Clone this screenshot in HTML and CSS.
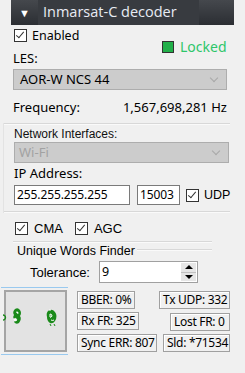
FILE: index.html
```html
<!DOCTYPE html>
<html lang="en">
<head>
  <meta charset="UTF-8">
  <title>Inmarsat-C decoder</title>
  <link rel="stylesheet" href="styles.css">
</head>
<body>
  <div class="panel">
    <div class="titlebar">
      <span class="arrow">&#9660;</span>
      <span class="title">Inmarsat-C decoder</span>
    </div>

    <div class="row-enabled">
      <label class="check"><span class="box on"></span>Enabled</label>
    </div>
    <div class="row-locked">
      <span class="led"></span><span class="locked">Locked</span>
    </div>

    <div class="les-label">LES:</div>
    <div class="select">AOR-W NCS 44<span class="chev"></span></div>

    <div class="freq">
      <span>Frequency:</span>
      <span class="freq-val">1,567,698,281 Hz</span>
    </div>

    <div class="netgroup">
      <div class="sep"></div>
      <div class="small-label">Network Interfaces:</div>
      <div class="select disabled">Wi-Fi<span class="chev"></span></div>
      <div class="ip-label">IP Address:</div>
      <div class="ip-row">
        <div class="input ip">255.255.255.255</div>
        <div class="input port">15003</div>
        <label class="check udp"><span class="box on"></span>UDP</label>
      </div>
      <div class="sep"></div>
    </div>

    <div class="opts">
      <label class="check"><span class="box on"></span>CMA</label>
      <label class="check"><span class="box on"></span>AGC</label>
    </div>

    <div class="uw-line"></div>
    <div class="uw-group">
      <div class="uw-legend"><span>Unique Words Finder</span><i></i></div>
      <div class="tol-row">
        <span class="tol-label">Tolerance:</span>
        <div class="input num">9
          <span class="spin"><b class="up"></b><b class="down"></b></span>
        </div>
      </div>
    </div>

    <div class="bottom">
      <div class="scope">
        <div class="scope-box">
          <svg width="62" height="58" viewBox="0 0 62 58">
            <path d="M0 18 a2.5 2.5 0 1 1 0 5" fill="none" stroke="#1a8a1a" stroke-width="1.3"/>
            <path d="M12 12 q3 -2 5 1 q2 3 0 6 q2 3 -1 7 q-3 2 -5 -1 q2 -1 1 -3 q-3 -1 -1 -4 q-2 -3 1 -6z" fill="#1a8a1a"/>
            <path d="M11 22 q2 -2 3 1 q-1 2 -3 0z M13 15 l2 0 l0 2" fill="#fff" stroke="#fff" stroke-width="0.6"/>
            <path d="M45 14 q4 -3 7 1 q3 4 0 9 q-2 3 -5 2 q-3 -2 -3 -6 q-1 -4 1 -6z" fill="#1a8a1a"/>
            <path d="M47 17 q2 0 2 2 q-1 2 -2 1z M48 23 q2 1 3 0 M46 13 l2 0" fill="none" stroke="#fff" stroke-width="1"/>
            <path d="M47 27 l1 2 M51 27 l1 2" stroke="#1a8a1a" stroke-width="1"/>
          </svg>
        </div>
      </div>
      <div class="stats">
        <div class="stat-row">
          <span class="stat w-bber">BBER: 0%</span>
          <span class="stat w-tx">Tx UDP: 332</span>
        </div>
        <div class="stat-row">
          <span class="stat w-rx">Rx FR: 325</span>
          <span class="stat w-lost">Lost FR: 0</span>
        </div>
        <div class="stat-row">
          <span class="stat w-sync">Sync ERR: 807</span>
          <span class="stat w-sld">Sld: *71534</span>
        </div>
      </div>
    </div>
  </div>
</body>
</html>
```

FILE: styles.css
```css
body {
  margin: 0;
  background: #f0f0f0;
  font-family: "Noto Sans", "Open Sans", sans-serif;
  font-size: 12px;
  color: #000;
}
.panel {
  width: 245px;
  height: 373px;
  overflow: hidden;
}
.titlebar {
  margin: 0 11px;
  height: 25px;
  background: linear-gradient(#45484d, #2b2e33);
  display: flex;
  align-items: center;
}
.arrow {
  color: #fff;
  font-size: 11px;
  width: 27px;
  text-align: center;
}
.title {
  background: #383b40;
  color: #e8ecf4;
  font-family: "Open Sans", sans-serif;
  font-size: 14.5px;
  height: 25px;
  line-height: 24px;
  padding-left: 5px;
  width: 156px;
}

.check {
  display: inline-flex;
  align-items: center;
  gap: 6px;
}
.box {
  width: 11px;
  height: 11px;
  border: 1px solid #333;
  background: #fff;
  position: relative;
}
.box.on::after {
  content: "";
  position: absolute;
  left: 3px;
  top: 0;
  width: 3px;
  height: 7px;
  border: solid #333;
  border-width: 0 1px 1px 0;
  transform: rotate(40deg);
}

.row-enabled {
  padding: 4px 0 0 14px;
  height: 12px;
  line-height: 12px;
  font-size: 12.5px;
}
.row-enabled .check { gap: 5px; }
.row-locked {
  display: flex;
  align-items: center;
  padding-left: 162px;
  margin-top: -1px;
  height: 13px;
}
.led {
  width: 10px;
  height: 10px;
  background: #22b04a;
  border: 1px solid #333;
}
.locked {
  color: #2ec66a;
  font-size: 14px;
  margin-left: 6px;
}

.les-label {
  padding-left: 13px;
  margin-top: -3px;
  font-size: 13px;
  line-height: 16px;
  height: 19px;
}
.select {
  margin: 0 18px 0 13px;
  height: 19px;
  background: #cccccc;
  border: 1px solid #adadad;
  font-size: 13px;
  line-height: 19px;
  padding-left: 6px;
  position: relative;
}
.chev {
  position: absolute;
  right: 9px;
  top: 5px;
  width: 5px;
  height: 5px;
  border: solid #a8a8a8;
  border-width: 0 1px 1px 0;
  transform: rotate(45deg);
}
.freq {
  display: flex;
  padding: 9px 0 0 13px;
  font-size: 13px;
  line-height: 16px;
  height: 17px;
}
.freq-val {
  margin-left: 43px;
}

.netgroup {
  margin-top: 7px;
  border-left: 1px solid #e3e3e3;
  margin-left: 3px;
}
.sep {
  height: 1px;
  background: #d8d8d8;
  border-bottom: 1px solid #fafafa;
  width: 226px;
}
.small-label {
  padding: 2px 0 0 10px;
  font-family: "Liberation Sans", sans-serif;
  font-size: 12px;
  line-height: 14px;
  color: #111;
}
.netgroup .select {
  margin: 1px 16px 0 10px;
  color: #a2a2a2;
  padding-left: 4px;
}
.ip-label {
  padding: 2px 0 0 10px;
  font-size: 13px;
  line-height: 17px;
}
.ip-row {
  display: flex;
  align-items: center;
  padding: 3px 0 6px 10px;
}
.input {
  background: #fff;
  border: 1px solid #7a7a7a;
  height: 18px;
  line-height: 18px;
  font-size: 12px;
  letter-spacing: -0.1px;
  padding-left: 2px;
  box-sizing: border-box;
}
.input.ip {
  width: 116px;
  height: 20px;
}
.input.port {
  width: 43px;
  height: 20px;
  margin-left: 7px;
}
.udp {
  margin-left: 6px;
  gap: 5px;
  font-family: "Liberation Sans", sans-serif;
  font-size: 12.5px;
}

.opts {
  display: flex;
  gap: 12px;
  padding: 8px 0 0 15px;
  height: 14px;
  font-family: "Liberation Sans", sans-serif;
  font-size: 13px;
}

.uw-line {
  margin: 6px 0 0 13px;
  width: 199px;
  height: 1px;
  background: #d8d8d8;
  border-bottom: 1px solid #fafafa;
}
.uw-group {
  margin-left: 13px;
  width: 199px;
}
.uw-legend {
  display: flex;
  align-items: flex-start;
  font-family: "Liberation Sans", sans-serif;
  font-size: 12.5px;
  line-height: 14px;
  padding-top: 1px;
}
.uw-legend span {
  padding-left: 4px;
}
.uw-legend i {
  flex: 1;
  height: 1px;
  background: #d8d8d8;
  border-bottom: 1px solid #fafafa;
  margin: 5px 0 0 2px;
}
.tol-row {
  display: flex;
  align-items: center;
  padding: 3px 0 0 17px;
}
.tol-label {
  width: 69px;
  font-family: "Liberation Sans", sans-serif;
  font-size: 13px;
}
.input.num {
  width: 99px;
  height: 22px;
  line-height: 20px;
  font-size: 12.5px;
  position: relative;
  border-color: #a0a0a0;
}
.spin {
  position: absolute;
  right: 1px;
  top: 1px;
  width: 15px;
  height: 18px;
  background: #e6e6e6;
  display: flex;
  flex-direction: column;
}
.spin b {
  flex: 1;
  position: relative;
}
.spin .up::after, .spin .down::after {
  content: "";
  position: absolute;
  left: 4px;
  border-left: 4px solid transparent;
  border-right: 4px solid transparent;
}
.spin .up::after {
  top: 2px;
  border-bottom: 4px solid #000;
}
.spin .down {
  border-top: 1px solid #c0c0c0;
}
.spin .down::after {
  top: 2px;
  border-top: 4px solid #000;
}

.bottom {
  display: flex;
  margin-top: 4px;
}
.scope {
  margin-left: 1px;
  width: 67px;
  border-top: 1px solid #99c9ef;
  border-bottom: 1px solid #99c9ef;
  padding: 2px 0;
}
.scope-box {
  margin-left: 3px;
  width: 59px;
  height: 58px;
  border: 2px solid #a5a5a5;
  background: #e3e3e3;
}
.scope-box svg {
  display: block;
  margin: 5px 0 0 -3px;
}
.stats {
  margin-left: 9px;
  margin-top: 4px;
  width: 153px;
  display: flex;
  flex-direction: column;
  gap: 3px;
}
.stat-row {
  display: flex;
  justify-content: space-between;
}
.stat {
  border: 1px solid #a0a0a0;
  box-shadow: inset 1px 1px 0 #fff;
  height: 16px;
  line-height: 15px;
  font-size: 12px;
  letter-spacing: -0.3px;
  padding: 0 3px;
  white-space: nowrap;
  box-sizing: content-box;
}
.w-bber { width: 50px; }
.w-tx { width: 63px; }
.w-rx { width: 54px; }
.w-lost { width: 52px; margin-top: 1px; }
.w-sync { width: 72px; }
.w-sld { width: 59px; }
```
